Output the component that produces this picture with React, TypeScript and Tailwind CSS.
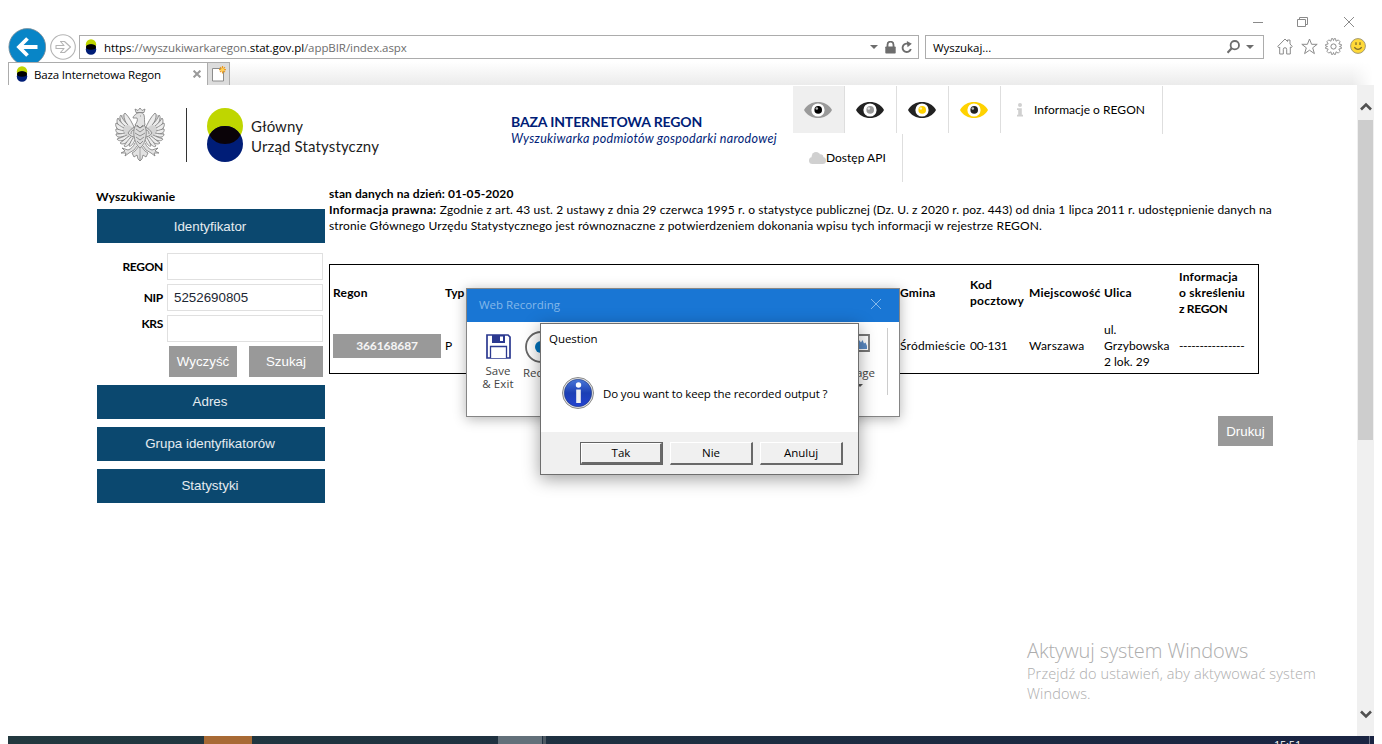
import React from "react";

const LATO = "font-['Lato',sans-serif]";
const UI = "font-['Open_Sans','Noto_Sans',sans-serif]";

function T({ className = "", children }: { className?: string; children: React.ReactNode }) {
  return <span className={`inline-block whitespace-nowrap ${className}`}>{children}</span>;
}

function Favicon() {
  return (
    <svg width="12" height="16" viewBox="0 0 12 16" className="shrink-0">
      <ellipse cx="6" cy="5.5" rx="5.200" ry="5.300" fill="#bfd600" />
      <ellipse cx="6" cy="10.500" rx="5.200" ry="5.300" fill="#001d77" />
      <ellipse cx="6" cy="8" rx="5" ry="2.700" fill="#000" />
    </svg>
  );
}

function Eye({ body, iris }: { body: string; iris: string }) {
  return (
    <svg width="28" height="16" viewBox="0 0 28 16" className="-ml-[2px]">
      <path d="M0 8C3 2.600 8.500 0 14 0S25 2.600 28 8C25 13.400 19.500 16 14 16S3 13.400 0 8Z" fill={body} />
      <circle cx="14" cy="8" r="6.600" fill="#fff" />
      <circle cx="14.200" cy="7.900" r="3.800" fill={iris} />
      <circle cx="12.800" cy="6.500" r="1.300" fill="#fff" opacity=".7" />
    </svg>
  );
}

function Eagle() {
  const feathers = [
    "M20 21C17 15 15 10 10 5C8 6 9 12 12 16",
    "M13 17C9 13 7 10 6 7C4 8 5 13 8 18",
    "M10 18C6 15 4 12 3 10C1 12 2 17 6 20",
    "M9 20C5 18 3 16 1 15C0 17 1 21 6 23",
    "M9 23C5 22 3 21 1 21C0 23 2 26 7 26",
    "M10 25C6 26 3 26 1 26C1 29 4 30 9 28",
    "M12 27C8 29 5 30 2 31C3 33 7 34 12 30",
    "M14 28C10 31 8 33 5 35C7 37 11 36 15 31",
    "M16 29C13 32 11 35 9 38C11 40 14 37 18 31",
    "M18 30C16 33 15 35 14 38C16 39 18 36 20 32",
  ];
  const half = (
    <g>
      <path d="M20 22C17 13 14 9 10 5L6 8L3 11L1 16V26L4 31L9 36L15 35L20 30Z" fill="#d4d4d4" stroke="none" />
      {feathers.map((d) => <path key={d} d={d} fill="#ececec" />)}
      <path d="M20 19C17 20 15 22 13 25C15 28 18 29 20 29M19 22C17 22 16 24 16 26" fill="#dedede" />
      <path d="M20 35C18 39 16 41 13 42L7 40L10 43L6 45L11 45L10 48L14 45L19 42L22 38" fill="#e2e2e2" />
      <path d="M24 38L20 43L17 45L19 49L22 47L23 51L25 53" fill="#e2e2e2" />
    </g>
  );
  return (
    <svg width="50" height="54" viewBox="0 0 50 54" fill="none" stroke="#757575" strokeWidth=".75" strokeLinejoin="round">
      {half}
      <g transform="translate(50 0) scale(-1 1)">{half}</g>
      <path d="M25 13C20 15 18 22 19 28C20 34 22 38 25 40C28 38 30 34 31 28C32 22 30 15 25 13Z" fill="#dcdcdc" />
      <path d="M21 6C23 4 28 4 29 7C30 10 29 13 30 17L25 20L20 17C22 14 23 12 22 10L18 10C18 8 20 7 21 6Z" fill="#e2e2e2" />
      <path d="M21 4.500L20 1L23 2.500L25 0L27 2.500L30 1L29 4.500Z" fill="#e6e6e6" />
      <path d="M21 21L25 24L29 21M20 25L25 28L30 25M21 29L25 32L29 29M22 33L25 36L28 33M22 17L25 20L28 17M25 8H26M25 40V53" />
    </svg>
  );
}

function Toolbar() {
  return (
    <div className="flex h-[32px] items-center pl-[8px]">
      <svg width="38" height="38" viewBox="0 0 38 38" className="mt-[2px] shrink-0">
        <circle cx="19.300" cy="19" r="18.400" fill="#0885c7" stroke="#7a8a94" strokeWidth=".8" />
        <path d="M29.500 19H11.500M19.500 10.500L11 19L19.500 27.500" fill="none" stroke="#fff" strokeWidth="3.800" />
      </svg>
      <svg width="26" height="26" viewBox="0 0 26 26" className="ml-[4px] mt-[2px] shrink-0" fill="none" stroke="#b4b4b4" strokeWidth="1.100">
        <circle cx="13" cy="13" r="12.300" />
        <path d="M6 11.500H14L10.500 7.500H14.500L20.500 13L14.500 18.500H10.500L14 14.500H6Z" strokeLinejoin="round" />
      </svg>
      <div className="ml-[3px] mt-[2px] flex h-[24px] w-[840px] shrink-0 items-center border border-[#acacac] pl-[5px] pr-[5px]">
        <Favicon />
        <div className={`ml-[7px] mt-px flex-1 text-[11.5px] text-[#6d6d6d] ${UI}`}>
          <T className="tracking-[-0.07px]"><span className="text-black">https</span>://wyszukiwarkaregon.<span className="text-black">stat.gov.pl</span>/appBIR/index.aspx</T>
        </div>
        <svg width="8" height="4" viewBox="0 0 8 4" className="mr-[7px]"><path d="M0 0H8L4 4Z" fill="#6d6d6d" /></svg>
        <svg width="11" height="13" viewBox="0 0 11 13" className="mr-[5px]"><path d="M2.500 6V3.700A3 3 0 0 1 8.500 3.700V6" fill="none" stroke="#6d6d6d" strokeWidth="1.800" /><rect x=".3" y="5.500" width="10.400" height="7" rx=".8" fill="#6d6d6d" /></svg>
        <svg width="12" height="13" viewBox="0 0 12 13"><path d="M8.500 3.600A4.200 4.200 0 1 0 9.800 8" fill="none" stroke="#6d6d6d" strokeWidth="1.900" /><path d="M5.800 0L10.800 2.800L6.500 6.200Z" fill="#6d6d6d" /></svg>
      </div>
      <div className="ml-[6px] mt-[2px] flex h-[24px] w-[339px] shrink-0 items-center border border-[#acacac] pl-[7px] pr-[9px]">
        <div className={`mt-px flex-1 text-[11.5px] text-black ${UI}`}><T className="tracking-[-0.05px]">Wyszukaj...</T></div>
        <svg width="13" height="14" viewBox="0 0 13 14" className="mr-[6px]" fill="none" stroke="#6d6d6d"><circle cx="7.800" cy="5.200" r="4.200" strokeWidth="1.800" /><path d="M4.700 8.300L.5 12.700" strokeWidth="2.200" /></svg>
        <svg width="8" height="4" viewBox="0 0 8 4"><path d="M0 0H8L4 4Z" fill="#6d6d6d" /></svg>
      </div>
      <svg width="16" height="17" viewBox="0 0 16 17" className="ml-[13px] shrink-0" fill="none" stroke="#8a8a8a"><path d="M.7 8.500L8 1L10.500 3.500V2H13V6L15.300 8.500L14 9.700L13.300 9V16H9.700V11.300Q9.700 9.700 8 9.700T6.300 11.300V16H2.700V9L2 9.700Z" strokeLinejoin="round" /></svg>
      <svg width="17" height="17" viewBox="0 0 17 17" className="ml-[8px] shrink-0" fill="none" stroke="#8a8a8a"><path d="M8.500 1L10.600 6.300H16.200L11.700 9.800L13.400 15.600L8.500 12.200L3.600 15.600L5.300 9.800L.8 6.300H6.400Z" /></svg>
      <svg width="17" height="17" viewBox="0 0 17 17" className="ml-[7px] shrink-0" fill="none" stroke="#8a8a8a"><path d="M6.500.6H7.800L8.500 2.500L9.200.6H10.500L11 3.200L13.300 1.900L15.100 3.700L13.800 6L16.400 6.500V7.800L14.500 8.500L16.400 9.200V10.500L13.800 11L15.100 13.300L13.300 15.100L11 13.800L10.500 16.400H9.200L8.500 14.500L7.800 16.400H6.500L6 13.800L3.700 15.100L1.900 13.300L3.200 11L.6 10.500V9.200L2.500 8.500L.6 7.800V6.500L3.200 6L1.900 3.700L3.700 1.900L6 3.200Z" strokeLinejoin="round" strokeWidth=".9" /><circle cx="8.500" cy="8.500" r="2.600" /></svg>
      <svg width="16" height="16" viewBox="0 0 16 16" className="ml-[8px] shrink-0"><circle cx="8" cy="8" r="7.400" fill="#ffd937" stroke="#a39a76" /><path d="M6 4.300V7M10 4.300V7M4.300 9.300Q8 13.400 11.700 9.300" fill="none" stroke="#7d6a2a" strokeWidth="1.300" /></svg>
    </div>
  );
}

function Tabs() {
  return (
    <div className="relative flex h-[23px] pl-[8px]">
      <div className="flex w-[200px] items-center border-x border-t border-[#acacac] bg-white pl-[7px] pr-[6px]">
        <Favicon />
        <div className={`ml-[6px] mt-px flex-1 text-[11.5px] text-black ${UI}`}><T className="tracking-[-0.17px]">Baza Internetowa Regon</T></div>
        <svg width="8" height="8" viewBox="0 0 8 8" stroke="#9a9a9a" strokeWidth="2"><path d="M.6.600L7.400 7.400M7.400.600L.6 7.400" /></svg>
      </div>
      <div className="flex w-[22px] items-center justify-center border-r border-t border-[#acacac] bg-[#dcdcdc]">
        <svg width="14" height="16" viewBox="0 0 14 16"><path d="M.5 2.500H11.500V15H.5Z" fill="#fff" stroke="#8c8c8c" /><path d="M10.500 0V7.500M7 3.700H14M8 1.200L13 6.200M13 1.200L8 6.200" stroke="#f09a1a" strokeWidth="1.200" /><circle cx="10.500" cy="3.700" r="1.700" fill="#ffd257" /></svg>
      </div>
      <div className="flex-1 bg-linear-to-b from-white to-[#ebebeb] mask-r-from-[1122px] mask-r-to-[1143px]" />
      <div className="w-[8px]" />
    </div>
  );
}

function Header() {
  const eyes = [
    ["#9a9a9a", "#000"],
    ["#222", "#9a9a9a"],
    ["#222", "#ffd200"],
    ["#ffd200", "#222"],
  ];
  return (
    <header className="flex h-[97px]">
      <div className="flex w-[503px] items-start pl-[107px] pt-[23px]">
        <Eagle />
        <div className="ml-[21px] h-[54px] w-px bg-[#333]" />
        <svg width="36" height="54" viewBox="0 0 36 54" className="ml-[20px]">
          <circle cx="18" cy="18" r="18" fill="#bfd600" />
          <circle cx="18" cy="36" r="18" fill="#001d77" />
          <path d="M2.400 27A18 18 0 0 1 33.600 27A18 18 0 0 1 2.400 27Z" fill="#0a0308" />
        </svg>
        <div className={`ml-[8px] mt-[8px] flex flex-col items-start text-[15px] leading-[20px] text-[#222] ${LATO}`}>
          <T className="tracking-[0.07px]">Główny</T>
          <T className="tracking-[0.14px]">Urząd Statystyczny</T>
        </div>
      </div>
      <div className={`flex w-[282px] flex-col items-start pt-[28px] text-[#001d77] ${LATO}`}>
        <T className="text-[14px] font-bold leading-[18px] tracking-[-0.14px]">BAZA INTERNETOWA REGON</T>
        <T className="text-[12.5px] italic leading-[16px] tracking-[0.3px]">Wyszukiwarka podmiotów gospodarki narodowej</T>
      </div>
      <nav className={`flex flex-col pt-px text-[12px] text-black ${LATO}`}>
        <div className="flex h-[48px]">
          {eyes.map(([body, iris], i) => (
            <div key={i} className={`flex h-[47px] w-[52px] items-center justify-center border-r border-[#dedede] ${i === 0 ? "bg-[#efefef]" : ""}`}>
              <Eye body={body} iris={iris} />
            </div>
          ))}
          <div className="flex w-[162px] items-center border-r border-[#dedede] pl-[16px]">
            <svg width="6" height="14" viewBox="0 0 6 14" fill="#d0d0d0"><circle cx="3" cy="2" r="2" /><path d="M0 5.300H4.800V11.700H6V13.500H0V11.700H1.200V7H0Z" /></svg>
            <T className="ml-[11px] tracking-[0.02px]">Informacje o REGON</T>
          </div>
        </div>
        <div className="flex h-[48px] w-[110px] items-center border-r border-[#dedede] pl-[16px]">
          <svg width="17" height="12" viewBox="0 0 17 12" fill="#d0d0d0"><circle cx="7" cy="4.300" r="4.300" /><circle cx="11.500" cy="5" r="2.800" /><rect y="5" width="17" height="7" rx="3.500" /></svg>
          <T>Dostęp API</T>
        </div>
      </nav>
    </header>
  );
}

function Field({ label, value, low }: { label: string; value?: string; low?: boolean }) {
  return (
    <div className="flex h-[27px]">
      <div className={`flex w-[67px] justify-end text-[12px] font-bold leading-[16px] tracking-[-0.3px] ${low ? "pt-px" : "pt-[6px]"} ${LATO}`}>{label}</div>
      <div className="ml-[4px] h-[27px] w-[156px] border border-[#e0e0e0] bg-white pl-[6px] font-['Liberation_Sans',sans-serif] text-[13.33px] leading-[25px] text-[#1c2733]">{value}</div>
    </div>
  );
}

function Sidebar() {
  const bar = "flex h-[34px] w-[228px] items-center justify-center bg-[#0b486f] pr-[2px] font-['Liberation_Sans',sans-serif] text-[13.33px] text-white/90";
  const btn = "flex h-[31px] items-center justify-center bg-[#999] font-['Liberation_Sans',sans-serif] text-[13.33px] text-white";
  return (
    <aside className="flex w-[229px] flex-col pt-[7px]">
      <div className={`text-[12px] font-bold leading-[16px] ${LATO}`}><T className="tracking-[0.15px]">Wyszukiwanie</T></div>
      <div className={`${bar} ml-px mt-[4px] pt-px`}>Identyfikator</div>
      <div className="mt-[10px] flex flex-col gap-[4px]">
        <Field label="REGON" />
        <Field label="NIP" value="5252690805" />
        <Field label="KRS" low />
      </div>
      <div className="mt-[4px] flex gap-[12px] pl-[73px]">
        <div className={`${btn} w-[68px]`}>Wyczyść</div>
        <div className={`${btn} w-[74px]`}>Szukaj</div>
      </div>
      <div className="ml-px mt-[8px] flex flex-col gap-[8px]">
        <div className={bar}>Adres</div>
        <div className={bar}>Grupa identyfikatorów</div>
        <div className={bar}>Statystyki</div>
      </div>
    </aside>
  );
}

function Results() {
  const cols = "grid grid-cols-[112px_455px_70px_59px_75px_75px_80px] items-center pl-[3px]";
  return (
    <main className={`ml-[4px] flex w-[944px] flex-col pt-[4px] text-[12px] leading-[16px] text-black ${LATO}`}>
      <T className="self-start font-bold tracking-[0.09px]">stan danych na dzień: 01-05-2020</T>
      <div className="flex whitespace-nowrap">
        <T className="font-bold tracking-[0.28px]">Informacja prawna:&nbsp;</T>
        <T className="tracking-[0.116px]">Zgodnie z art. 43 ust. 2 ustawy z dnia 29 czerwca 1995 r. o statystyce publicznej (Dz. U. z 2020 r. poz. 443) od dnia 1 lipca 2011 r. udostępnienie danych na</T>
      </div>
      <T className="self-start tracking-[0.149px]">stronie Głównego Urzędu Statystycznego jest równoznaczne z potwierdzeniem dokonania wpisu tych informacji w rejestrze REGON.</T>
      <div className="mt-[30px] h-[110px] w-[930px] border border-black">
        <div className={`${cols} h-[56px] font-bold tracking-[0.22px]`}>
          <div>Regon</div>
          <div className="tracking-normal">Typ</div>
          <div>Gmina</div>
          <div>Kod<br />pocztowy</div>
          <div>Miejscowość</div>
          <div>Ulica</div>
          <div className="whitespace-nowrap">Informacja<br />o skreśleniu<br /><span className="tracking-[-0.3px]">z REGON</span></div>
        </div>
        <div className={`${cols} h-[50px]`}>
          <div className="flex h-[24px] w-[108px] items-center justify-center bg-[#999] font-bold tracking-[-0.1px] text-white/90">366168687</div>
          <div>P</div>
          <div className="tracking-[0.2px]">Śródmieście</div>
          <div className="tracking-[-0.3px]">00-131</div>
          <div className="tracking-[0.2px]">Warszawa</div>
          <div>ul.<br /><span className="tracking-[0.08px]">Grzybowska</span><br />2 lok. 29</div>
          <div className="tracking-[-0.38px]">----------------</div>
        </div>
      </div>
      <div className="mt-[42px] flex h-[30px] w-[55px] items-center justify-center self-end bg-[#999] pt-px font-['Liberation_Sans',sans-serif] text-[13.33px] text-white">Drukuj</div>
    </main>
  );
}

function DialogButton({ label, primary }: { label: string; primary?: boolean }) {
  return (
    <div className={`h-[23px] w-[83px] ${primary ? "border border-[#646464]" : ""}`}>
      <div className="flex h-full items-center justify-center border-b-2 border-l border-r-2 border-t border-b-[#696969] border-l-white border-r-[#696969] border-t-white bg-[#f0f0f0]">{label}</div>
    </div>
  );
}

function RecordingWindow() {
  return (
    <div className={`absolute left-[466px] top-[288px] h-[129px] w-[434px] border border-[#858585] bg-white shadow-[0_2px_12px_rgba(0,0,0,0.3)] ${UI}`}>
      <div className="flex h-[33px] items-center justify-between bg-[#1976d4] pb-[2px] pl-[12px] pr-[17px] text-[11.5px] text-[#84b8ea]">
        <T>Web Recording</T>
        <svg width="12" height="12" viewBox="0 0 12 12" stroke="#84b8ea" className="-mt-px"><path d="M1 1L11 11M11 1L1 11" /></svg>
      </div>
      <div className="flex text-[11.5px] leading-[13px] text-[#444]">
        <div className="flex w-[62px] flex-col items-center pt-[12px]">
          <svg width="25" height="25" viewBox="0 0 25 25"><path d="M1 1H22L24 3V24H1Z" fill="#fff" stroke="#2b3990" strokeWidth="1.700" /><path d="M6 1H19V9H6Z" fill="#2b3990" /><path d="M14 2.500H17V7H14Z" fill="#fff" /><path d="M4.500 24V12.500H20.500V24" fill="#fff" stroke="#2b3990" strokeWidth="1.300" /></svg>
          <T className="mt-[5px]">Save</T>
          <T className="tracking-[0.15px]">&amp; Exit</T>
        </div>
        <div className="flex w-[30px] flex-col pt-[9px]">
          <svg width="32" height="32" viewBox="0 0 32 32" className="ml-[-4px]"><circle cx="16" cy="16" r="15" fill="#fff" stroke="#666" strokeWidth="1.800" /><circle cx="16" cy="16" r="6" fill="#0072bc" /></svg>
          <T className="mt-[3px] ml-[-6px]">Record</T>
        </div>
      </div>
      <div className="absolute right-[20px] top-[45px] flex flex-col items-end text-[11.5px] leading-[13px] text-[#444]">
        <svg width="26" height="18" viewBox="0 0 26 18" className="mr-[9px]"><path d="M1 1H25V17H1Z" fill="#fff" stroke="#777" strokeWidth="1.800" /><path d="M3 15L9 6L13 11L15 6L17 8.500L18.500 6L20 9.500L21.500 8.500L23 12V15Z" fill="#5b8bc5" /></svg>
        <T className="mr-[4px] mt-[14px]">Image</T>
        <svg width="6" height="3" viewBox="0 0 6 3" className="mr-[16px] mt-[5px]"><path d="M0 0H6L3 3Z" fill="#555" /></svg>
      </div>
      <div className="absolute right-[11px] top-[39px] h-[67px] w-px bg-[#ccc]" />
    </div>
  );
}

function QuestionDialog() {
  return (
    <div className={`absolute left-[540px] top-[323px] flex h-[152px] w-[319px] flex-col border border-[#6e6e6e] bg-white text-[11.5px] text-black shadow-[0_4px_16px_rgba(0,0,0,0.38)] ${UI}`}>
      <div className="h-[30px] pl-[8px] pt-[6px] leading-[18px]"><T className="tracking-[-0.05px]">Question</T></div>
      <div className="flex h-[78px] items-center pl-[21px]">
        <svg width="32" height="32" viewBox="0 0 32 32">
          <defs><linearGradient id="info" x1="0" y1="0" x2="0" y2="1"><stop offset="0" stopColor="#4a78d8" /><stop offset=".5" stopColor="#1c3fb4" /><stop offset="1" stopColor="#2342d0" /></linearGradient></defs>
          <circle cx="16" cy="16" r="15.500" fill="#e4e4e4" stroke="#8a8a8a" />
          <circle cx="16" cy="16" r="13.700" fill="url(#info)" stroke="#223a80" strokeWidth=".6" />
          <circle cx="16.500" cy="8" r="2.700" fill="#fff" />
          <path d="M14.200 12.500H18.800V26H14.200Z" fill="#f0f0f0" />
        </svg>
        <T className="ml-[9px] mt-[2px] tracking-[-0.14px]">Do you want to keep the recorded output ?</T>
      </div>
      <div className="flex h-[42px] gap-[7px] bg-[#f0f0f0] pl-[39px] pt-[10px]">
        <DialogButton label="Tak" primary />
        <DialogButton label="Nie" />
        <DialogButton label="Anuluj" />
      </div>
    </div>
  );
}

export default function App() {
  return (
    <div className="relative flex h-[744px] w-[1382px] flex-col overflow-hidden bg-white">
      <div className="flex h-[30px] items-start justify-end gap-[35px] pr-[27px] pt-[16px]">
        <svg width="11" height="12" viewBox="0 0 11 12" stroke="#8a8a8a" className="-mr-[2px]"><path d="M0 6.500H10" /></svg>
        <svg width="11" height="12" viewBox="0 0 11 12" fill="none" stroke="#8a8a8a"><path d="M.5 3.500H8.500V10.500H.5ZM2.500 3.500V1.500H10.500V8.500H8.500" /></svg>
        <svg width="12" height="12" viewBox="0 0 12 12" stroke="#8a8a8a"><path d="M1 1L11 11M11 1L1 11" /></svg>
      </div>
      <Toolbar />
      <Tabs />
      <div className="flex h-[651px] px-[8px]">
        <div className="flex flex-1 flex-col">
          <Header />
          <div className="flex pl-[88px]">
            <Sidebar />
            <Results />
          </div>
        </div>
        <div className="flex w-[17px] flex-col items-center bg-[#f0f0f0]">
          <div className="flex h-[35px] items-center pt-[9px]"><svg width="12" height="10" viewBox="0 0 12 10" fill="none" stroke="#505050" strokeWidth="2.600"><path d="M1 7.500L6 2.500L11 7.500" /></svg></div>
          <div className="h-[320px] w-[15px] bg-[#cdcdcd]" />
          <div className="mt-auto flex h-[30px] items-start"><svg width="12" height="10" viewBox="0 0 12 10" fill="none" stroke="#505050" strokeWidth="2.600" className="mt-[3px]"><path d="M1 2.500L6 7.500L11 2.500" /></svg></div>
        </div>
      </div>
      <div className="mx-[8px] flex h-[8px] overflow-hidden bg-linear-to-r from-[#22393f] to-[#1a2442]">
        <div className="ml-[196px] w-[48px] bg-[#a86a35]" />
        <div className="ml-[246px] w-[44px] bg-[#63707a]" />
        <div className="ml-px w-[3px] bg-[#4d5963]" />
        <div className={`ml-auto mr-[68px] mt-[3px] text-[11px] leading-[12px] tracking-[-0.2px] text-white ${UI}`}>15:51</div>
        <div className="mr-[4px] w-px bg-[#6b7488]" />
      </div>
      <div className={`absolute left-[1027px] top-[638px] flex flex-col items-start text-[#adadad] ${UI}`}>
        <T className="text-[20px] leading-[26px] font-light tracking-[-0.1px]">Aktywuj system Windows</T>
        <T className="text-[14.5px] leading-[20px] font-light tracking-[0.13px]">Przejdź do ustawień, aby aktywować system</T>
        <T className="text-[14.5px] leading-[20px] font-light tracking-[0.13px]">Windows.</T>
      </div>
      <RecordingWindow />
      <QuestionDialog />
    </div>
  );
}
